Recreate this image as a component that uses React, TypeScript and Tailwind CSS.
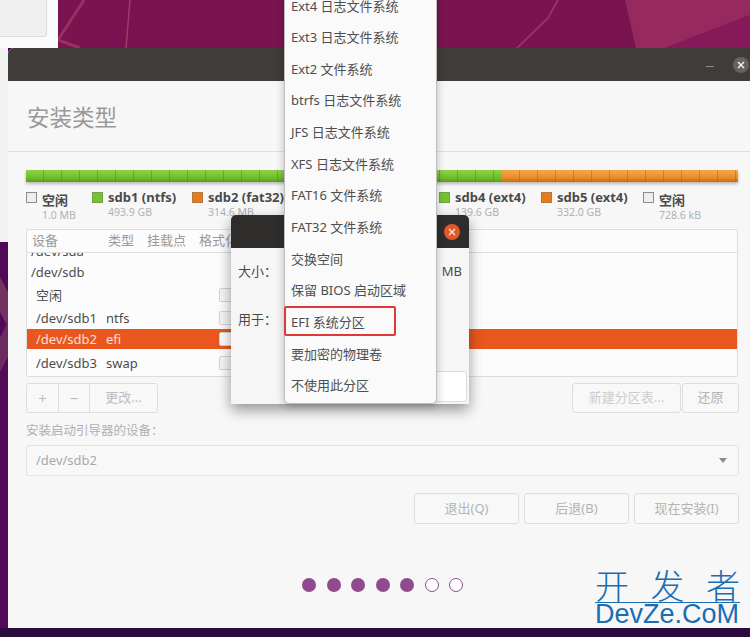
const font = "[font-family:'Noto_Sans','Noto_Sans_CJK_SC',sans-serif]";

const legend = [
  { name: "空闲", size: "1.0 MB", swatch: "bg-[#eeeeee]", w: "w-[66px]", free: true },
  { name: "sdb1 (ntfs)", size: "493.9 GB", swatch: "bg-[#73c52a]", w: "w-[100px]", free: false },
  { name: "sdb2 (fat32)", size: "314.6 MB", swatch: "bg-[#ea7a16]", w: "w-[247px]", free: false },
  { name: "sdb4 (ext4)", size: "139.6 GB", swatch: "bg-[#73c52a]", w: "w-[102px]", free: false },
  { name: "sdb5 (ext4)", size: "332.0 GB", swatch: "bg-[#ea7a16]", w: "w-[102px]", free: false },
  { name: "空闲", size: "728.6 kB", swatch: "bg-[#eeeeee]", w: "w-[70px]", free: true },
];

const rows = [
  { dev: "/dev/sda", type: "", h: "h-[9px]", nudge: "-mt-[12px]", check: false, sel: false, pl: "pl-[4px]", w: "w-[75px]" },
  { dev: "/dev/sdb", type: "", h: "h-[21px]", nudge: "", check: false, sel: false, pl: "pl-[4px]", w: "w-[75px]" },
  { dev: "空闲", type: "", h: "h-[24px]", nudge: "mt-[2px]", check: true, sel: false, pl: "pl-[9px]", w: "w-[70px]" },
  { dev: "/dev/sdb1", type: "ntfs", h: "h-[22px]", nudge: "mt-[2px]", check: true, sel: false, pl: "pl-[9px]", w: "w-[70px]" },
  { dev: "/dev/sdb2", type: "efi", h: "h-[20px]", nudge: "mt-[2px]", check: true, sel: true, pl: "pl-[9px]", w: "w-[70px]" },
  { dev: "/dev/sdb3", type: "swap", h: "h-[27px]", nudge: "mt-[2px]", check: true, sel: false, pl: "pl-[9px]", w: "w-[70px]" },
];

const fsItems = [
  "Ext4 日志文件系统",
  "Ext3 日志文件系统",
  "Ext2 文件系统",
  "btrfs 日志文件系统",
  "JFS 日志文件系统",
  "XFS 日志文件系统",
  "FAT16 文件系统",
  "FAT32 文件系统",
  "交换空间",
  "保留 BIOS 启动区域",
  "EFI 系统分区",
  "要加密的物理卷",
  "不使用此分区",
];

function GhostButton({ label, className }: { label: string; className: string }) {
  return (
    <div className={`flex items-center justify-center rounded-[3px] border border-[#dedede] bg-[#f8f8f8] text-[13px] text-[#b4b4b4] ${className}`}>
      {label}
    </div>
  );
}

function Swatch({ color, free }: { color: string; free: boolean }) {
  return <div className={`mt-[1px] h-[11px] w-[11px] shrink-0 border ${free ? "border-[#8c8c8c]" : "border-[#777]/50"} ${color}`} />;
}

export default function App() {
  return (
    <div className={`relative flex h-[637px] w-[750px] flex-col overflow-hidden bg-[#4a0650] ${font}`}>
      {/* wallpaper */}
      <svg className="absolute left-0 top-0 h-[48px] w-[750px]" viewBox="0 0 750 48">
        <rect width="750" height="48" fill="#7a1450" />
        <polygon points="625,0 750,0 750,15 665,48 636,48" fill="#962a5e" />
        <polygon points="750,15 665,48 750,48" fill="#86195a" />
        <path d="M130 0 L126 48" stroke="#a03a68" strokeWidth="1.5" fill="none" />
        <path d="M84 0 L58 40 L80 48" stroke="#9a2f62" strokeWidth="3" fill="none" />
        <path d="M558 0 L548 18 L517 48" stroke="#a03a68" strokeWidth="1.5" fill="none" />
      </svg>
      <svg className="absolute left-0 top-[242px] h-[386px] w-[8px]" viewBox="0 0 8 386">
        <rect width="8" height="386" fill="#520a58" />
        <polygon points="0,35 8,50 8,85 0,70" fill="#74305f" />
        <polygon points="0,95 8,80 8,115 0,130" fill="#6b2a60" />
      </svg>

      <div className="relative flex h-[48px] shrink-0">
        <div className="h-full w-[58px] bg-[#fafafa]">
          <div className="h-[37px] w-[47px] rounded-br-[3px] border-b border-r border-[#dcdcdc] bg-[#f0f0f0]" />
        </div>
      </div>
      {/* window behind the installer */}
      <div className="absolute left-0 top-[48px] h-[194px] w-[8px] bg-[#f1f1f1]" />

      {/* installer window */}
      <div className="relative ml-2 flex h-[580px] w-[760px] shrink-0 flex-col rounded-t-[6px] bg-[#f7f7f7]">
        <div className="flex h-[33px] shrink-0 items-center rounded-t-[6px] bg-[#403c3a] pl-[698px]">
          <div className="mt-[3px] h-px w-[8px] bg-[#8f8c8a]" />
          <div className="ml-[19px] flex h-[16px] w-[16px] items-center justify-center rounded-full bg-[#66625f]">
            <svg width="8" height="8" viewBox="0 0 8 8">
              <path d="M1 1 L7 7 M7 1 L1 7" stroke="#f2f2f2" strokeWidth="1.5" />
            </svg>
          </div>
        </div>

        <div className="flex h-[71px] shrink-0 items-center border-b border-[#dfdfdf] pl-[19px] text-[22.5px] text-[#999999]">
          <span className="mt-[4px]">安装类型</span>
        </div>

        <div className="ml-[18px] flex w-[713px] flex-col pt-[18px]">
          {/* usage bar */}
          <div className="flex h-[12px] w-[712px] shadow-[0_2px_3px_rgba(0,0,0,0.25)]">
            <div className="relative h-full w-[476px] bg-[linear-gradient(#8fd14a,#73c02e_60%,#5b9e20)]">
              <div className="absolute inset-0 bg-[repeating-linear-gradient(90deg,transparent_0,transparent_17px,rgba(60,110,20,0.35)_17px,rgba(60,110,20,0.35)_18px)]" />
            </div>
            <div className="relative h-full flex-1 bg-[linear-gradient(#f5a64a,#ee8e2a_60%,#c46f18)]">
              <div className="absolute inset-0 bg-[repeating-linear-gradient(90deg,transparent_0,transparent_17px,rgba(140,70,10,0.35)_17px,rgba(140,70,10,0.35)_18px)]" />
            </div>
          </div>

          {/* legend */}
          <div className="mt-[9px] flex h-[38px]">
            {legend.map((item, i) => (
              <div key={i} className={`flex gap-[5px] ${item.w}`}>
                <Swatch color={item.swatch} free={item.free} />
                <div className={`flex flex-col ${item.free ? "pt-[1px]" : "-mt-[2px]"}`}>
                  <span className="whitespace-nowrap text-[13px] font-bold leading-[17px] text-[#4a4a4a]">{item.name}</span>
                  <span className="whitespace-nowrap text-[10.5px] leading-[13px] text-[#b0b0b0]">{item.size}</span>
                </div>
              </div>
            ))}
          </div>

          {/* partition table */}
          <div className="h-[148px] w-[712px] overflow-hidden rounded-[2px] border border-[#dddddd] bg-[#fcfcfc]">
            <div className="flex h-[23px] items-center border-b border-[#dddddd] pl-[5px] text-[13px] text-[#9a9a9a]">
              <span className="w-[76px]">设备</span>
              <span className="w-[39px]">类型</span>
              <span className="w-[52px]">挂载点</span>
              <span>格式化?</span>
            </div>
            {rows.map((row) => (
              <div
                key={row.dev}
                className={`flex items-center overflow-hidden text-[13px] ${row.h} ${row.pl} ${row.sel ? "bg-[#e9571f] text-[#f5e0d8]" : "text-[#4c4c4c]"}`}
              >
                <span className={`whitespace-nowrap ${row.nudge} ${row.w}`}>{row.dev}</span>
                <span className={`w-[113px] ${row.nudge}`}>{row.type}</span>
                {row.check && <div className={`h-[14px] w-[14px] rounded-[2px] border border-[#d4d4d4] ${row.sel ? "bg-white" : "bg-[#f6f6f6]"}`} />}
              </div>
            ))}
          </div>

          {/* table toolbar */}
          <div className="mt-[6px] flex h-[30px] justify-between">
            <div className="flex h-full w-[132px] rounded-[3px] border border-[#dedede] bg-[#f8f8f8] text-[#bcbcbc]">
              <div className="flex w-[32px] items-center justify-center border-r border-[#dedede] text-[15px]">+</div>
              <div className="flex w-[31px] items-center justify-center border-r border-[#dedede] text-[15px]">−</div>
              <div className="flex flex-1 items-center justify-center text-[13px]">更改...</div>
            </div>
            <div className="flex h-full gap-px">
              <GhostButton label="新建分区表..." className="w-[109px] text-[#cccccc]" />
              <GhostButton label="还原" className="w-[57px]" />
            </div>
          </div>

          <div className="mt-[9px] text-[12.5px] leading-[17px] text-[#b0b0b0]">安装启动引导器的设备：</div>
          <div className="mt-[6px] flex h-[31px] items-center justify-between rounded-[3px] border border-[#e2e2e2] bg-[#f8f8f8] pl-[9px] pr-[11px] text-[13px] text-[#a8a8a8]">
            <span>/dev/sdb2</span>
            <div className="h-0 w-0 border-x-[4.5px] border-t-[5px] border-x-transparent border-t-[#8a8a8a]" />
          </div>

          <div className="mt-[17px] flex justify-end gap-[5px]">
            <GhostButton label="退出(Q)" className="h-[31px] w-[105px]" />
            <GhostButton label="后退(B)" className="h-[31px] w-[105px]" />
            <GhostButton label="现在安装(I)" className="h-[31px] w-[105px]" />
          </div>

          {/* slide progress */}
          <div className="ml-[276px] mt-[54px] flex gap-[10.5px]">
            {[0, 1, 2, 3, 4].map((d) => (
              <div key={d} className="h-[14px] w-[14px] rounded-full bg-[#924a8e]" />
            ))}
            {[5, 6].map((d) => (
              <div key={d} className="h-[14px] w-[14px] rounded-full border border-[#924a8e] bg-white" />
            ))}
          </div>
        </div>
      </div>
      <div className="h-[9px] shrink-0 bg-[#2b0a3d]" />

      {/* partition dialog */}
      <div className="absolute left-[231px] top-[215px] flex h-[189px] w-[238px] flex-col rounded-t-[5px] bg-[#f6f6f6] shadow-[0_6px_14px_rgba(0,0,0,0.4)]">
        <div className="flex h-[33px] shrink-0 items-center justify-end rounded-t-[5px] bg-[#2f2d2c] pr-[9px]">
          <div className="flex h-[16px] w-[16px] items-center justify-center rounded-full bg-[#e4572a]">
            <svg width="8" height="8" viewBox="0 0 8 8">
              <path d="M1 1 L7 7 M7 1 L1 7" stroke="#fbe3d8" strokeWidth="1.4" />
            </svg>
          </div>
        </div>
        <div className="flex h-[48px] items-center justify-between pl-[7px] pr-[7px] text-[13px] text-[#4a4a4a]">
          <span>大小：</span>
          <span>MB</span>
        </div>
        <div className="flex h-[48px] items-center pl-[7px] text-[13px] text-[#4a4a4a]">用于：</div>
        <div className="mb-[2px] ml-auto mr-[2px] mt-auto h-[31px] w-[60px] rounded-[3px] border border-[#dddddd] bg-white" />
      </div>

      {/* filesystem dropdown */}
      <div className="absolute left-[284px] top-[-11px] flex h-[415px] w-[153px] flex-col rounded-b-[5px] border border-[#bdbdbd] bg-[#fafafa] pl-[6px] pt-[0.5px] text-[13px] text-[#4e4e4e] shadow-[0_2px_8px_rgba(0,0,0,0.25)]">
        {fsItems.map((label) => (
          <div key={label} className="flex h-[31.65px] shrink-0 items-center whitespace-nowrap">
            {label}
          </div>
        ))}
        {/* red annotation box */}
        <div className="absolute -left-px top-[316px] h-[30px] w-[112px] rounded-[2px] border-2 border-[#e0383a]" />
      </div>

      {/* site watermark */}
      <div className="absolute left-[595px] top-[570px] flex w-[145px] flex-col text-[#1a6db3]">
        <div className="flex h-[32px] items-center justify-between text-[34px] font-light leading-none">
          <span>开</span>
          <span>发</span>
          <span>者</span>
        </div>
        <div className="h-px bg-[#1a6db3]" />
        <div className="-mt-[2px] text-[27px] leading-[27px] [font-family:'Liberation_Sans',sans-serif]">DevZe.CoM</div>
      </div>
    </div>
  );
}
